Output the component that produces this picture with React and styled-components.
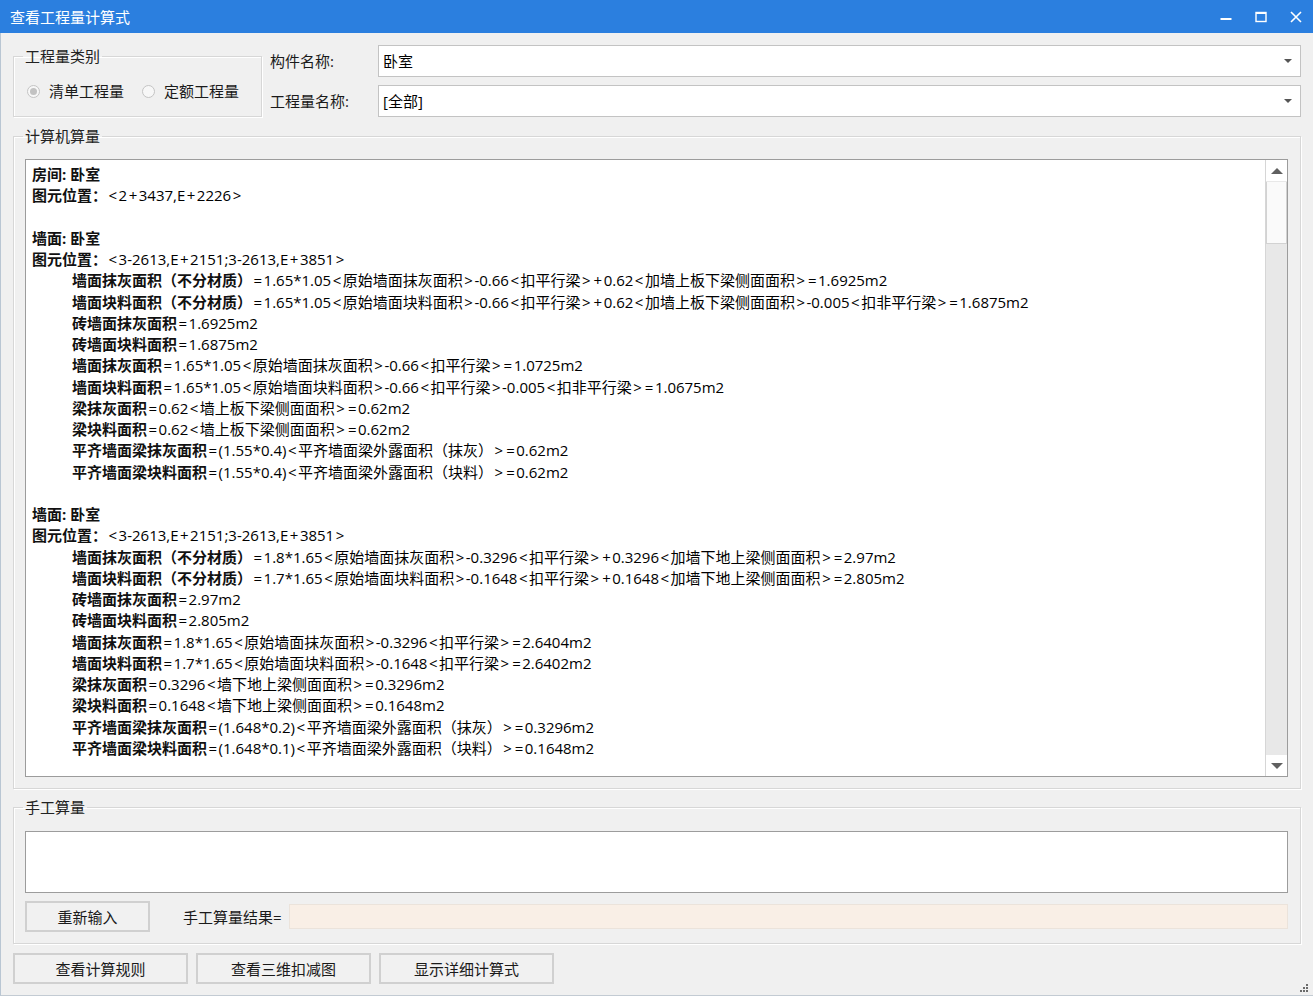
import React from "react";
import styled, { createGlobalStyle } from "styled-components";

const GlobalStyle = createGlobalStyle`
  html, body {
    margin: 0;
    padding: 0;
    overflow: hidden;
    background: #f0f0f0;
  }
  body {
    font-family: "Open Sans", "Noto Sans CJK SC", "Microsoft YaHei", sans-serif;
    font-size: 15px;
    color: #000;
  }
`;

const Window = styled.div`
  width: 1313px;
  height: 996px;
  box-sizing: border-box;
  display: flex;
  flex-direction: column;
  background: #f0f0f0;
  border-left: 1px solid #b9c6d3;
  border-bottom: 1px solid #c3cbd3;
`;

const TitleBar = styled.div`
  height: 33px;
  flex-shrink: 0;
  display: flex;
  align-items: center;
  justify-content: space-between;
  background: #2b7fdf;
  padding-left: 10px;
  margin-left: -1px;
`;

const TitleText = styled.div`
  color: #fff;
  font-size: 15px;
  line-height: 20px;
`;

const WinControls = styled.div`
  display: flex;
  height: 100%;
`;

const WinButton = styled.div`
  width: 35px;
  height: 100%;
  display: flex;
  align-items: center;
  justify-content: center;
`;

const Body = styled.div`
  flex: 1;
  display: flex;
  flex-direction: column;
  padding: 12px 12px 0 12px;
`;

const TopRow = styled.div`
  display: flex;
  gap: 8px;
`;

const GroupBox = styled.fieldset`
  margin: ${(p) => p.$mt || 0}px 0 0 0;
  padding: 0 12px ${(p) => p.$pb ?? 11}px 11px;
  border: 1px solid #d7d7d7;
  box-shadow: inset 1px 1px 0 #fff, 1px 1px 0 #fff;
  min-width: 0;
  box-sizing: border-box;
  width: ${(p) => (p.$w ? `${p.$w}px` : "auto")};
  height: ${(p) => (p.$h ? `${p.$h}px` : "auto")};
`;

const Legend = styled.legend`
  padding: 0 2px;
  margin-left: -2px;
  font-size: 15px;
  line-height: 18px;
  color: #222;
`;

const RadioRow = styled.div`
  display: flex;
  align-items: center;
  height: 20px;
  margin-top: 16px;
  padding-left: 2px;
`;

const RadioItem = styled.label`
  display: flex;
  align-items: center;
  gap: 9px;
  margin-right: ${(p) => p.$mr || 0}px;
  color: #1a1a1a;
  line-height: 20px;
`;

const RadioCircle = styled.span`
  width: 13px;
  height: 13px;
  box-sizing: border-box;
  border-radius: 50%;
  border: 1px solid #c4c4c4;
  background: #f7f7f7;
  display: flex;
  align-items: center;
  justify-content: center;
  &::after {
    content: "";
    width: 7px;
    height: 7px;
    border-radius: 50%;
    background: ${(p) => (p.$checked ? "#c2c2c2" : "transparent")};
  }
`;

const FieldGrid = styled.div`
  flex: 1;
  display: grid;
  grid-template-columns: 108px 1fr;
  row-gap: 8px;
  align-items: center;
`;

const FieldLabel = styled.div`
  color: #1a1a1a;
  line-height: 20px;
`;

const Combo = styled.div`
  height: 32px;
  box-sizing: border-box;
  border: 1px solid #c3c3c3;
  background: #fff;
  display: flex;
  align-items: center;
  justify-content: space-between;
  padding: 0 8px 0 4px;
  line-height: 20px;
`;

const ComboArrow = styled.span`
  width: 0;
  height: 0;
  border-left: 4px solid transparent;
  border-right: 4px solid transparent;
  border-top: 4px solid #555;
`;

const TextPanel = styled.div`
  margin-top: 14px;
  height: 618px;
  box-sizing: border-box;
  border: 1px solid #9c9c9c;
  background: #fff;
  display: flex;
  overflow: hidden;
`;

const TextContent = styled.div`
  flex: 1;
  padding: 4px 6px 0;
  overflow: hidden;
  white-space: nowrap;
`;

const Line = styled.div`
  height: 21.25px;
  line-height: 21.25px;
  padding-left: ${(p) => (p.$indent ? 40 : 0)}px;
`;

const Key = styled.span`
  font-weight: 700;
  color: #111;
`;

const Sym = styled.span`
  padding: 0 1.5px;
`;

const ScrollBar = styled.div`
  width: 21px;
  display: flex;
  flex-direction: column;
  border-left: 1px solid #d6d6d6;
  background: #e8e8e8;
`;

const ScrollArrow = styled.div`
  height: 21px;
  flex-shrink: 0;
  background: #fff;
  display: flex;
  align-items: center;
  justify-content: center;
`;

const Triangle = styled.span`
  width: 0;
  height: 0;
  border-left: 6px solid transparent;
  border-right: 6px solid transparent;
  ${(p) => (p.$up ? "border-bottom: 6px solid #606060;" : "border-top: 6px solid #606060;")}
`;

const ScrollThumb = styled.div`
  height: 62px;
  margin-top: 1px;
  box-sizing: border-box;
  background: #fafafa;
  border: 1px solid #d2d2d2;
  border-top: none;
`;

const ScrollTrack = styled.div`
  flex: 1;
`;

const ManualArea = styled.div`
  margin-top: 15px;
  height: 62px;
  box-sizing: border-box;
  border: 1px solid #9c9c9c;
  background: #fff;
`;

const ManualRow = styled.div`
  display: flex;
  align-items: center;
  margin-top: 8px;
  height: 31px;
`;

const Button = styled.button`
  width: ${(p) => p.$w}px;
  height: 31px;
  box-sizing: border-box;
  border: 2px solid #d0d0d0;
  background: #f1f1f1;
  font-family: inherit;
  font-size: 15px;
  color: #1a1a1a;
  padding: 0;
  line-height: 20px;
`;

const ResultLabel = styled.div`
  margin-left: 33px;
  margin-right: 7px;
  color: #1a1a1a;
  line-height: 20px;
`;

const ResultField = styled.div`
  flex: 1;
  height: 25px;
  box-sizing: border-box;
  border: 1px solid #ebe3db;
  background: #f9efe6;
`;

const ButtonRow = styled.div`
  display: flex;
  gap: 8px;
  margin-top: 9px;
  align-items: flex-start;
`;

const Grip = styled.svg`
  margin-left: auto;
  margin-right: -8px;
  margin-top: 30px;
`;

const lines = [
  { key: "房间: 卧室" },
  { key: "图元位置：", value: "<2+3437,E+2226>" },
  {},
  { key: "墙面: 卧室" },
  { key: "图元位置：", value: "<3-2613,E+2151;3-2613,E+3851>" },
  { indent: true, key: "墙面抹灰面积（不分材质）", value: "=1.65*1.05<原始墙面抹灰面积>-0.66<扣平行梁>+0.62<加墙上板下梁侧面面积>=1.6925m2" },
  { indent: true, key: "墙面块料面积（不分材质）", value: "=1.65*1.05<原始墙面块料面积>-0.66<扣平行梁>+0.62<加墙上板下梁侧面面积>-0.005<扣非平行梁>=1.6875m2" },
  { indent: true, key: "砖墙面抹灰面积", value: "=1.6925m2" },
  { indent: true, key: "砖墙面块料面积", value: "=1.6875m2" },
  { indent: true, key: "墙面抹灰面积", value: "=1.65*1.05<原始墙面抹灰面积>-0.66<扣平行梁>=1.0725m2" },
  { indent: true, key: "墙面块料面积", value: "=1.65*1.05<原始墙面块料面积>-0.66<扣平行梁>-0.005<扣非平行梁>=1.0675m2" },
  { indent: true, key: "梁抹灰面积", value: "=0.62<墙上板下梁侧面面积>=0.62m2" },
  { indent: true, key: "梁块料面积", value: "=0.62<墙上板下梁侧面面积>=0.62m2" },
  { indent: true, key: "平齐墙面梁抹灰面积", value: "=(1.55*0.4)<平齐墙面梁外露面积（抹灰）>=0.62m2" },
  { indent: true, key: "平齐墙面梁块料面积", value: "=(1.55*0.4)<平齐墙面梁外露面积（块料）>=0.62m2" },
  {},
  { key: "墙面: 卧室" },
  { key: "图元位置：", value: "<3-2613,E+2151;3-2613,E+3851>" },
  { indent: true, key: "墙面抹灰面积（不分材质）", value: "=1.8*1.65<原始墙面抹灰面积>-0.3296<扣平行梁>+0.3296<加墙下地上梁侧面面积>=2.97m2" },
  { indent: true, key: "墙面块料面积（不分材质）", value: "=1.7*1.65<原始墙面块料面积>-0.1648<扣平行梁>+0.1648<加墙下地上梁侧面面积>=2.805m2" },
  { indent: true, key: "砖墙面抹灰面积", value: "=2.97m2" },
  { indent: true, key: "砖墙面块料面积", value: "=2.805m2" },
  { indent: true, key: "墙面抹灰面积", value: "=1.8*1.65<原始墙面抹灰面积>-0.3296<扣平行梁>=2.6404m2" },
  { indent: true, key: "墙面块料面积", value: "=1.7*1.65<原始墙面块料面积>-0.1648<扣平行梁>=2.6402m2" },
  { indent: true, key: "梁抹灰面积", value: "=0.3296<墙下地上梁侧面面积>=0.3296m2" },
  { indent: true, key: "梁块料面积", value: "=0.1648<墙下地上梁侧面面积>=0.1648m2" },
  { indent: true, key: "平齐墙面梁抹灰面积", value: "=(1.648*0.2)<平齐墙面梁外露面积（抹灰）>=0.3296m2" },
  { indent: true, key: "平齐墙面梁块料面积", value: "=(1.648*0.1)<平齐墙面梁外露面积（块料）>=0.1648m2" },
];

// the original font draws < > = + with wide side bearings
const renderValue = (text) =>
  text
    .split(/([<>=+])/)
    .filter(Boolean)
    .map((part, i) => (/^[<>=+]$/.test(part) ? <Sym key={i}>{part}</Sym> : part));

export default function App() {
  return (
    <>
      <GlobalStyle />
      <Window>
        <TitleBar>
          <TitleText>查看工程量计算式</TitleText>
          <WinControls>
            <WinButton>
              <svg width="12" height="12" viewBox="0 0 12 12">
                <rect x="0.5" y="7" width="11" height="2" fill="#fff" />
              </svg>
            </WinButton>
            <WinButton>
              <svg width="12" height="12" viewBox="0 0 12 12">
                <rect x="1" y="1.5" width="10" height="9" fill="none" stroke="#fff" strokeWidth="1.4" />
                <rect x="1" y="1" width="10" height="2" fill="#fff" />
              </svg>
            </WinButton>
            <WinButton>
              <svg width="12" height="12" viewBox="0 0 12 12">
                <path d="M1 1 L11 11 M11 1 L1 11" stroke="#fff" strokeWidth="1.6" />
              </svg>
            </WinButton>
          </WinControls>
        </TitleBar>

        <Body>
          <TopRow>
            <GroupBox $w={249} $h={70} $mt={2} $pb={0}>
              <Legend>工程量类别</Legend>
              <RadioRow>
                <RadioItem $mr={18}>
                  <RadioCircle $checked />
                  清单工程量
                </RadioItem>
                <RadioItem>
                  <RadioCircle />
                  定额工程量
                </RadioItem>
              </RadioRow>
            </GroupBox>
            <FieldGrid>
              <FieldLabel>构件名称:</FieldLabel>
              <Combo>
                卧室
                <ComboArrow />
              </Combo>
              <FieldLabel>工程量名称:</FieldLabel>
              <Combo>
                [全部]
                <ComboArrow />
              </Combo>
            </FieldGrid>
          </TopRow>

          <GroupBox $mt={10}>
            <Legend>计算机算量</Legend>
            <TextPanel>
              <TextContent>
                {lines.map((l, i) => (
                  <Line key={i} $indent={l.indent}>
                    {l.key && <Key>{l.key}</Key>}
                    {l.value && renderValue(l.value)}
                  </Line>
                ))}
              </TextContent>
              <ScrollBar>
                <ScrollArrow>
                  <Triangle $up />
                </ScrollArrow>
                <ScrollThumb />
                <ScrollTrack />
                <ScrollArrow>
                  <Triangle />
                </ScrollArrow>
              </ScrollBar>
            </TextPanel>
          </GroupBox>

          <GroupBox $mt={9}>
            <Legend>手工算量</Legend>
            <ManualArea />
            <ManualRow>
              <Button $w={125}>重新输入</Button>
              <ResultLabel>手工算量结果=</ResultLabel>
              <ResultField />
            </ManualRow>
          </GroupBox>

          <ButtonRow>
            <Button $w={175}>查看计算规则</Button>
            <Button $w={175}>查看三维扣减图</Button>
            <Button $w={175}>显示详细计算式</Button>
            <Grip width="12" height="12" viewBox="0 0 12 12">
              <g fill="#6b6b6b">
                <rect x="9" y="1" width="2" height="2" />
                <rect x="6" y="4" width="2" height="2" />
                <rect x="9" y="4" width="2" height="2" />
                <rect x="3" y="7" width="2" height="2" />
                <rect x="6" y="7" width="2" height="2" />
                <rect x="9" y="7" width="2" height="2" />
              </g>
            </Grip>
          </ButtonRow>
        </Body>
      </Window>
    </>
  );
}
